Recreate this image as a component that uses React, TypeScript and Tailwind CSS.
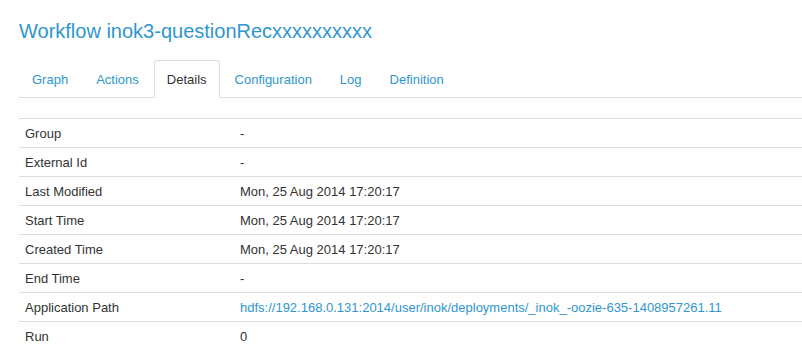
import React from "react";

const rows: [string, string, boolean?][] = [
  ["Group", "-"],
  ["External Id", "-"],
  ["Last Modified", "Mon, 25 Aug 2014 17:20:17"],
  ["Start Time", "Mon, 25 Aug 2014 17:20:17"],
  ["Created Time", "Mon, 25 Aug 2014 17:20:17"],
  ["End Time", "-"],
  ["Application Path", "hdfs://192.168.0.131:2014/user/inok/deployments/_inok_-oozie-635-1408957261.11", true],
  ["Run", "0"],
];

const tabs = ["Graph", "Actions", "Details", "Configuration", "Log", "Definition"];

export default function App() {
  return (
    <div
      className="w-[802px] h-[359px] overflow-hidden bg-white pl-[19px] text-[13px] text-[#333]"
      style={{ fontFamily: '"Liberation Sans", Arial, sans-serif' }}
    >
      <h1 className="pt-[17px] text-[20px] leading-[28px] text-[#2f96d0] font-normal">
        Workflow inok3-questionRecxxxxxxxxxx
      </h1>
      <div className="mt-[15px] flex border-b border-[#ddd] h-[38px]">
        {tabs.map((t) => {
          const active = t === "Details";
          return (
            <div
              key={t}
              className={
                "mr-[2px] px-[12px] pt-[10px] pb-[8px] leading-[18px] border rounded-t-[3px] h-[38px] " +
                (active
                  ? "border-[#ddd] border-b-white bg-white text-[#333] -mb-px"
                  : "border-transparent text-[#2f96d0]")
              }
            >
              {t}
            </div>
          );
        })}
      </div>
      <div className="mt-[20px]">
        {rows.map(([k, v, link]) => (
          <div key={k} className="flex border-t border-[#ddd] h-[29px] items-center pt-[2px]">
            <div className="w-[215px] pl-[6px]">{k}</div>
            <div className={"pl-[6px] whitespace-nowrap " + (link ? "text-[#2f96d0]" : "")}>{v}</div>
          </div>
        ))}
      </div>
    </div>
  );
}
